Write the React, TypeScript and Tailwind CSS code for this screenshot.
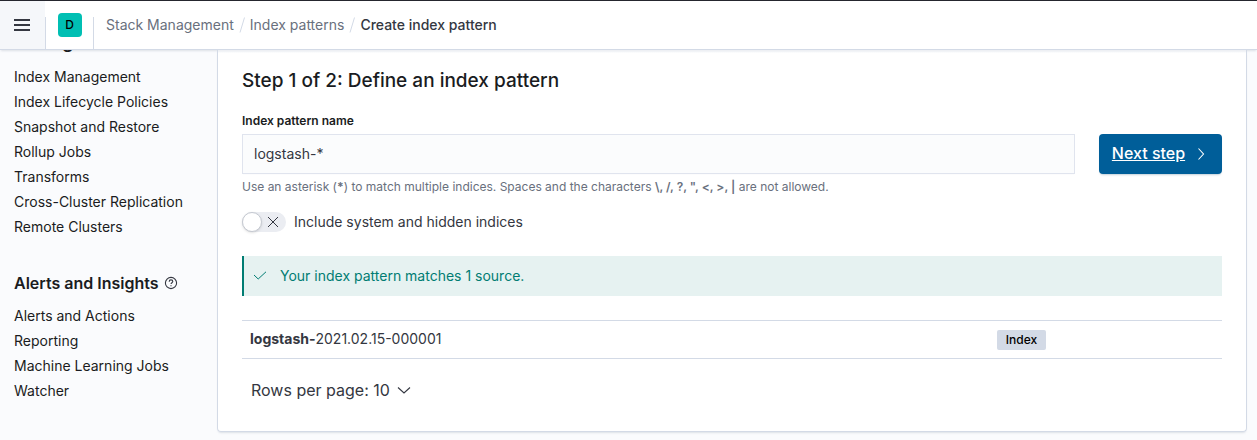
import { useState } from 'react';

const dataLinks = [
  'Index Management',
  'Index Lifecycle Policies',
  'Snapshot and Restore',
  'Rollup Jobs',
  'Transforms',
  'Cross-Cluster Replication',
  'Remote Clusters',
];

const alertLinks = ['Alerts and Actions', 'Reporting', 'Machine Learning Jobs', 'Watcher'];

function NavList({ items }: { items: string[] }) {
  return (
    <ul>
      {items.map((item) => (
        <li key={item} className="h-[25px]">
          <a href="#" className="text-sm leading-[25px] text-[#1a1c21]">
            {item}
          </a>
        </li>
      ))}
    </ul>
  );
}

function Slash() {
  return (
    <svg aria-hidden="true" className="h-4 w-2 shrink-0" viewBox="0 0 8 16" fill="none" stroke="#d3dae6">
      <path d="M6.5 0.5 2 15.5" />
    </svg>
  );
}

function Header() {
  return (
    <header className="flex h-[50px] items-stretch border-t border-b border-t-[#25262e] border-b-[#d3dae6] bg-white shadow-[0_2px_2px_-1px_rgba(152,162,179,0.3)]">
      <button type="button" aria-label="Toggle primary navigation" className="flex w-[45px] items-center bg-[#f5f7fa] pl-3.5">
        <svg className="h-4 w-4" viewBox="0 0 16 16" fill="#343741">
          <path d="M0 2h16v2H0zM0 7h16v2H0zM0 12h16v2H0z" />
        </svg>
      </button>
      <div className="mt-4 flex w-[49px] items-center justify-center border-x border-[#d3dae6]">
        <button type="button" aria-label="Default space" className="mb-4 flex h-6 w-6 items-center justify-center rounded bg-[#00bfb3] text-xs font-medium text-black">
          D
        </button>
      </div>
      <nav aria-label="Breadcrumbs" className="flex items-center gap-1 pl-3 text-sm text-[#69707d]">
        <a href="#">Stack Management</a>
        <Slash />
        <a href="#">Index patterns</a>
        <Slash />
        <span aria-current="page" className="font-medium text-[#343741]">Create index pattern</span>
      </nav>
    </header>
  );
}

function Sidebar() {
  return (
    <nav aria-label="Stack Management" className="w-[217px] shrink-0 pl-3.5">
      <h2 className="mb-3 flex h-0.5 items-end overflow-hidden text-lg leading-5 font-semibold text-[#1a1c21]">
        Management
      </h2>
      <NavList items={dataLinks} />
      <h2 className="mt-8 mb-2 flex h-6 items-center gap-1 text-base font-semibold text-[#1a1c21]">
        Alerts and Insights
        <svg aria-hidden="true" className="h-4 w-4" viewBox="0 0 16 16" fill="none" stroke="#343741" strokeWidth="1.1">
          <circle cx="8" cy="8" r="5.6" />
          <path d="M6.2 6.7c0-1.1.8-1.8 1.8-1.8s1.8.7 1.8 1.6c0 1.2-1.8 1.3-1.8 2.6" />
          <path d="M8 10.2v1" />
        </svg>
      </h2>
      <NavList items={alertLinks} />
    </nav>
  );
}

export default function App() {
  const [pattern, setPattern] = useState('logstash-*');
  const [hidden, setHidden] = useState(false);

  return (
    <div className="flex min-h-screen flex-col bg-[#fafbfd] font-[Inter,sans-serif] text-sm text-[#343741]">
      <Header />
      <div className="flex grow">
        <Sidebar />
        <main className="mr-2.5 mb-2 min-w-0 grow rounded-b border border-t-0 border-[#d3dae6] px-6 pt-4 shadow-[0_2px_2px_-1px_rgba(152,162,179,0.3)] bg-linear-to-b from-[#eef0f4] from-[1px] to-white to-[3px]">
          <h1 className="text-[19px] leading-[30px] font-medium text-[#1a1c21]">Step 1 of 2: Define an index pattern</h1>
          <form className="mt-[15px] flex gap-6" onSubmit={(e) => e.preventDefault()}>
            <div className="min-w-0 grow">
              <label htmlFor="pattern" className="block pb-1 text-xs leading-[19px] font-semibold text-[#1a1c21]">
                Index pattern name
              </label>
              <input
                id="pattern"
                type="text"
                value={pattern}
                onChange={(e) => setPattern(e.target.value)}
                className="block h-10 w-full border border-[#e0e4ee] bg-[#fbfcfd] px-[11px] pb-0.5 text-sm text-[#343741] shadow-[0_1px_1px_-1px_rgba(152,162,179,0.2)]"
              />
              <p className="pt-1 text-xs leading-[18px] text-[#69707d]">
                Use an asterisk (<strong>*</strong>) to match multiple indices. Spaces and the characters{' '}
                <strong className="font-semibold">{'\\, /, ?, ", <, >, |'}</strong> are not allowed.
              </p>
              <div className="mt-3.5 flex h-6 items-center gap-2">
                <button
                  id="hidden-indices"
                  type="button"
                  role="switch"
                  aria-checked={hidden}
                  onClick={() => setHidden(!hidden)}
                  className="flex h-5 w-11 items-center gap-[3px] rounded-full bg-[#ebedf2]"
                >
                  <span className="h-5 w-5 rounded-full border border-[#c5c9d1] bg-white shadow-sm" />
                  <svg className="h-4 w-4" viewBox="0 0 16 16" fill="none" stroke="#343741">
                    <path d="m3 3 10 10M13 3 3 13" />
                  </svg>
                </button>
                <label htmlFor="hidden-indices">Include system and hidden indices</label>
              </div>
            </div>
            <button
              type="submit"
              className="mt-[23px] flex h-10 w-[123px] items-center justify-center gap-2 rounded bg-[#005e99] text-base font-medium text-white shadow-[0_2px_2px_-1px_rgba(54,97,126,0.3)]"
            >
              <span className="pb-0.5 underline">Next step</span>
              <svg aria-hidden="true" className="h-4 w-4" viewBox="0 0 16 16" fill="none" stroke="currentColor" strokeWidth="1.1">
                <path d="m5.5 2.5 5 5.5-5 5.5" />
              </svg>
            </button>
          </form>
          <div role="status" className="mt-[22px] flex h-10 items-center gap-3 border-l-2 border-[#017d73] bg-[#e6f2f1] pl-2 text-[#017d73]">
            <svg aria-hidden="true" className="h-4 w-4" viewBox="0 0 16 16" fill="none" stroke="currentColor">
              <path d="m2 7 4.2 4L14 3.8" />
            </svg>
            Your index pattern matches 1 source.
          </div>
          <table aria-label="Matching indices" className="mt-6 w-full table-fixed border-y border-[#d3dae6]">
            <tbody>
              <tr className="h-[38px]">
                <td className="px-2 pb-0.5">
                  <strong>logstash-</strong>2021.02.15-000001
                </td>
                <td className="w-[233px] px-2">
                  <span className="flex h-5 w-[49px] items-center justify-center rounded-xs bg-[#d3dae6] text-xs font-medium text-black">Index</span>
                </td>
              </tr>
            </tbody>
          </table>
          <button type="button" className="my-[11px] ml-[9px] flex h-10 items-center gap-1.5 text-base">
            Rows per page: 10
            <svg aria-hidden="true" className="h-4 w-4" viewBox="0 0 16 16" fill="none" stroke="currentColor" strokeWidth="1.1">
              <path d="m2 5.5 6 5.5 6-5.5" />
            </svg>
          </button>
        </main>
      </div>
    </div>
  );
}
